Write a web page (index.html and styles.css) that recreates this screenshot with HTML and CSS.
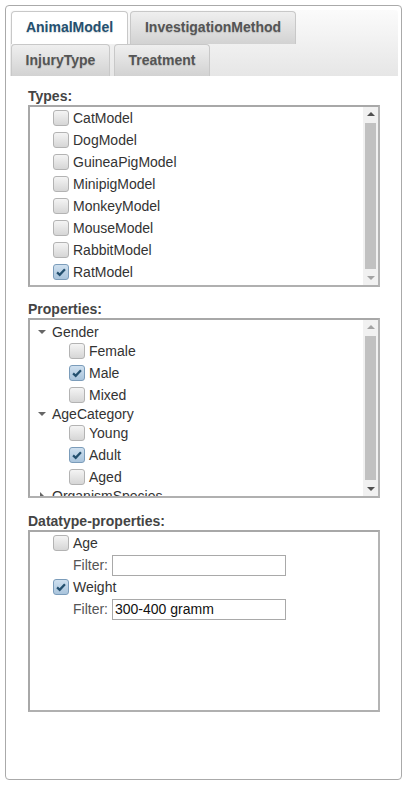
FILE: index.html
```html
<!DOCTYPE html>
<html>
<head>
<meta charset="utf-8">
<link rel="stylesheet" href="styles.css">
</head>
<body>
<div class="panel">
  <div class="tabbar">
    <div class="tabrow">
      <div class="tab active">AnimalModel</div>
      <div class="tab">InvestigationMethod</div>
    </div>
    <div class="tabrow">
      <div class="tab">InjuryType</div>
      <div class="tab">Treatment</div>
    </div>
  </div>
  <div class="content">
    <div class="label">Types:</div>
    <div class="box">
      <div class="list">
        <div class="row"><span class="cb"></span>CatModel</div>
        <div class="row"><span class="cb"></span>DogModel</div>
        <div class="row"><span class="cb"></span>GuineaPigModel</div>
        <div class="row"><span class="cb"></span>MinipigModel</div>
        <div class="row"><span class="cb"></span>MonkeyModel</div>
        <div class="row"><span class="cb"></span>MouseModel</div>
        <div class="row"><span class="cb"></span>RabbitModel</div>
        <div class="row"><span class="cb checked"><svg viewBox="0 0 16 16" width="14" height="14"><path d="M3.5 8.5 L6.5 11.2 L12.5 4.8" fill="none" stroke="#24506f" stroke-width="2.6"/></svg></span>RatModel</div>
      </div>
      <div class="sbar">
        <div class="arrow up dark"></div>
        <div class="thumb"></div>
        <div class="arrow down light"></div>
      </div>
    </div>

    <div class="label">Properties:</div>
    <div class="box props">
      <div class="list tree">
        <div class="node"><span class="tri"></span>Gender</div>
        <div class="row child"><span class="cb"></span>Female</div>
        <div class="row child"><span class="cb checked"><svg viewBox="0 0 16 16" width="14" height="14"><path d="M3.5 8.5 L6.5 11.2 L12.5 4.8" fill="none" stroke="#24506f" stroke-width="2.6"/></svg></span>Male</div>
        <div class="row child"><span class="cb"></span>Mixed</div>
        <div class="node"><span class="tri"></span>AgeCategory</div>
        <div class="row child"><span class="cb"></span>Young</div>
        <div class="row child"><span class="cb checked"><svg viewBox="0 0 16 16" width="14" height="14"><path d="M3.5 8.5 L6.5 11.2 L12.5 4.8" fill="none" stroke="#24506f" stroke-width="2.6"/></svg></span>Adult</div>
        <div class="row child"><span class="cb"></span>Aged</div>
        <div class="node"><span class="tri closed"></span>OrganismSpecies</div>
      </div>
      <div class="sbar">
        <div class="arrow up light"></div>
        <div class="thumb"></div>
        <div class="arrow down dark"></div>
      </div>
    </div>

    <div class="label">Datatype-properties:</div>
    <div class="box">
      <div class="list dt">
        <div class="row"><span class="cb"></span>Age</div>
        <div class="filter">Filter: <span class="input"></span></div>
        <div class="row"><span class="cb checked"><svg viewBox="0 0 16 16" width="14" height="14"><path d="M3.5 8.5 L6.5 11.2 L12.5 4.8" fill="none" stroke="#24506f" stroke-width="2.6"/></svg></span>Weight</div>
        <div class="filter">Filter: <span class="input">300-400 gramm</span></div>
      </div>
    </div>
  </div>
</div>
</body>
</html>
```

FILE: styles.css
```css
html, body {
  margin: 0;
  padding: 0;
  background: #fff;
}
body {
  font-family: "Liberation Sans", Arial, sans-serif;
  font-size: 14px;
  color: #333;
}
.panel {
  margin: 5px 0 0 5px;
  width: 397px;
  height: 775px;
  border: 1px solid #aaa;
  border-radius: 4px;
  padding: 4px 3px 0 4px;
  box-sizing: border-box;
}
.tabbar {
  background: linear-gradient(#fbfbfb, #e6e6e6);
  padding: 1px 0 0 1px;
  height: 66px;
  box-sizing: border-box;
  border-radius: 3px 3px 0 0;
}
.tabrow {
  display: flex;
  height: 33px;
}
.tab {
  height: 32px;
  box-sizing: border-box;
  border: 1px solid #c8c8c8;
  border-bottom: none;
  border-radius: 4px 4px 0 0;
  background: linear-gradient(#efefef, #d2d2d2);
  font-weight: bold;
  color: #555;
  text-shadow: 0 1px 1px rgba(0,0,0,0.15);
  line-height: 30px;
  padding: 0 13px;
  margin-right: 3px;
  white-space: nowrap;
}
.tabrow:first-child .tab {
  height: 33px;
}
.tab.active {
  background: #fff;
  color: #245070;
  margin-right: 2px;
  width: 117px;
  text-align: center;
  padding: 0;
}
.tabrow:first-child .tab:nth-child(2) {
  width: 166px;
  text-align: center;
  padding: 0;
}
.tabrow:last-child .tab:first-child {
  width: 99px;
  padding: 0;
  text-align: center;
  margin-right: 4px;
}
.tabrow:last-child .tab:last-child {
  width: 96px;
  padding: 0;
  text-align: center;
}
.content {
  padding: 12px 18px 0 18px;
}
.label {
  font-weight: bold;
  color: #444;
  height: 17px;
  line-height: 17px;
}
.box {
  display: flex;
  height: 182px;
  box-sizing: border-box;
  border: 2px solid #a8a8a8;
  border-right-color: #b4b4b4;
  border-bottom-color: #b0b0b0;
  margin-bottom: 14px;
  background: #fff;
}
.box.props {
  height: 180px;
  margin-bottom: 15px;
}
.list {
  flex: 1;
  overflow: hidden;
  padding: 0 0 0 23px;
}
.row {
  display: flex;
  align-items: center;
  height: 22px;
  white-space: nowrap;
}
.cb {
  width: 16px;
  height: 16px;
  box-sizing: border-box;
  border: 1px solid #b3b3b3;
  border-radius: 3px;
  background: linear-gradient(#f4f4f4, #d6d6d6);
  margin-right: 4px;
  display: inline-flex;
  align-items: center;
  justify-content: center;
  flex: none;
}
.cb.checked {
  background: linear-gradient(#cfe0ef, #a9c4dc);
  border-color: #7b9cba;
}
.tree {
  padding-left: 8px;
  padding-top: 4px;
}
.node {
  display: flex;
  align-items: center;
  height: 16px;
  line-height: 14px;
  white-space: nowrap;
}
.tri {
  width: 0;
  height: 0;
  border-left: 4px solid transparent;
  border-right: 4px solid transparent;
  border-top: 4px solid #666;
  margin-right: 6px;
  margin-left: 0;
}
.tri.closed {
  border-top: 4px solid transparent;
  border-bottom: 4px solid transparent;
  border-left: 4px solid #666;
  border-right: none;
  margin-left: 2px;
  margin-right: 8px;
}
.child {
  padding-left: 31px;
}
.sbar {
  width: 15px;
  flex: none;
  background: #f1f1f1;
  display: flex;
  flex-direction: column;
  align-items: center;
}
.arrow {
  height: 14px;
  width: 15px;
  display: flex;
  align-items: center;
  justify-content: center;
  flex: none;
}
.arrow::after {
  content: "";
  width: 0;
  height: 0;
  border-left: 4px solid transparent;
  border-right: 4px solid transparent;
}
.arrow.up::after { border-bottom: 4px solid currentColor; }
.arrow.down::after { border-top: 4px solid currentColor; }
.arrow.dark { color: #505050; }
.arrow.light { color: #a3a3a3; }
.thumb {
  width: 11px;
  flex: 1;
  background: #c1c1c1;
  margin: 2px 0;
}
.dt {
  padding-top: 0;
}
.filter {
  display: flex;
  align-items: center;
  height: 22px;
  padding-left: 20px;
  color: #555;
}
.input {
  display: inline-block;
  width: 174px;
  height: 21px;
  box-sizing: border-box;
  border: 1px solid #a9a9a9;
  margin-left: 4px;
  color: #111;
  font-size: 14px;
  line-height: 19px;
  padding-left: 2px;
}
```
